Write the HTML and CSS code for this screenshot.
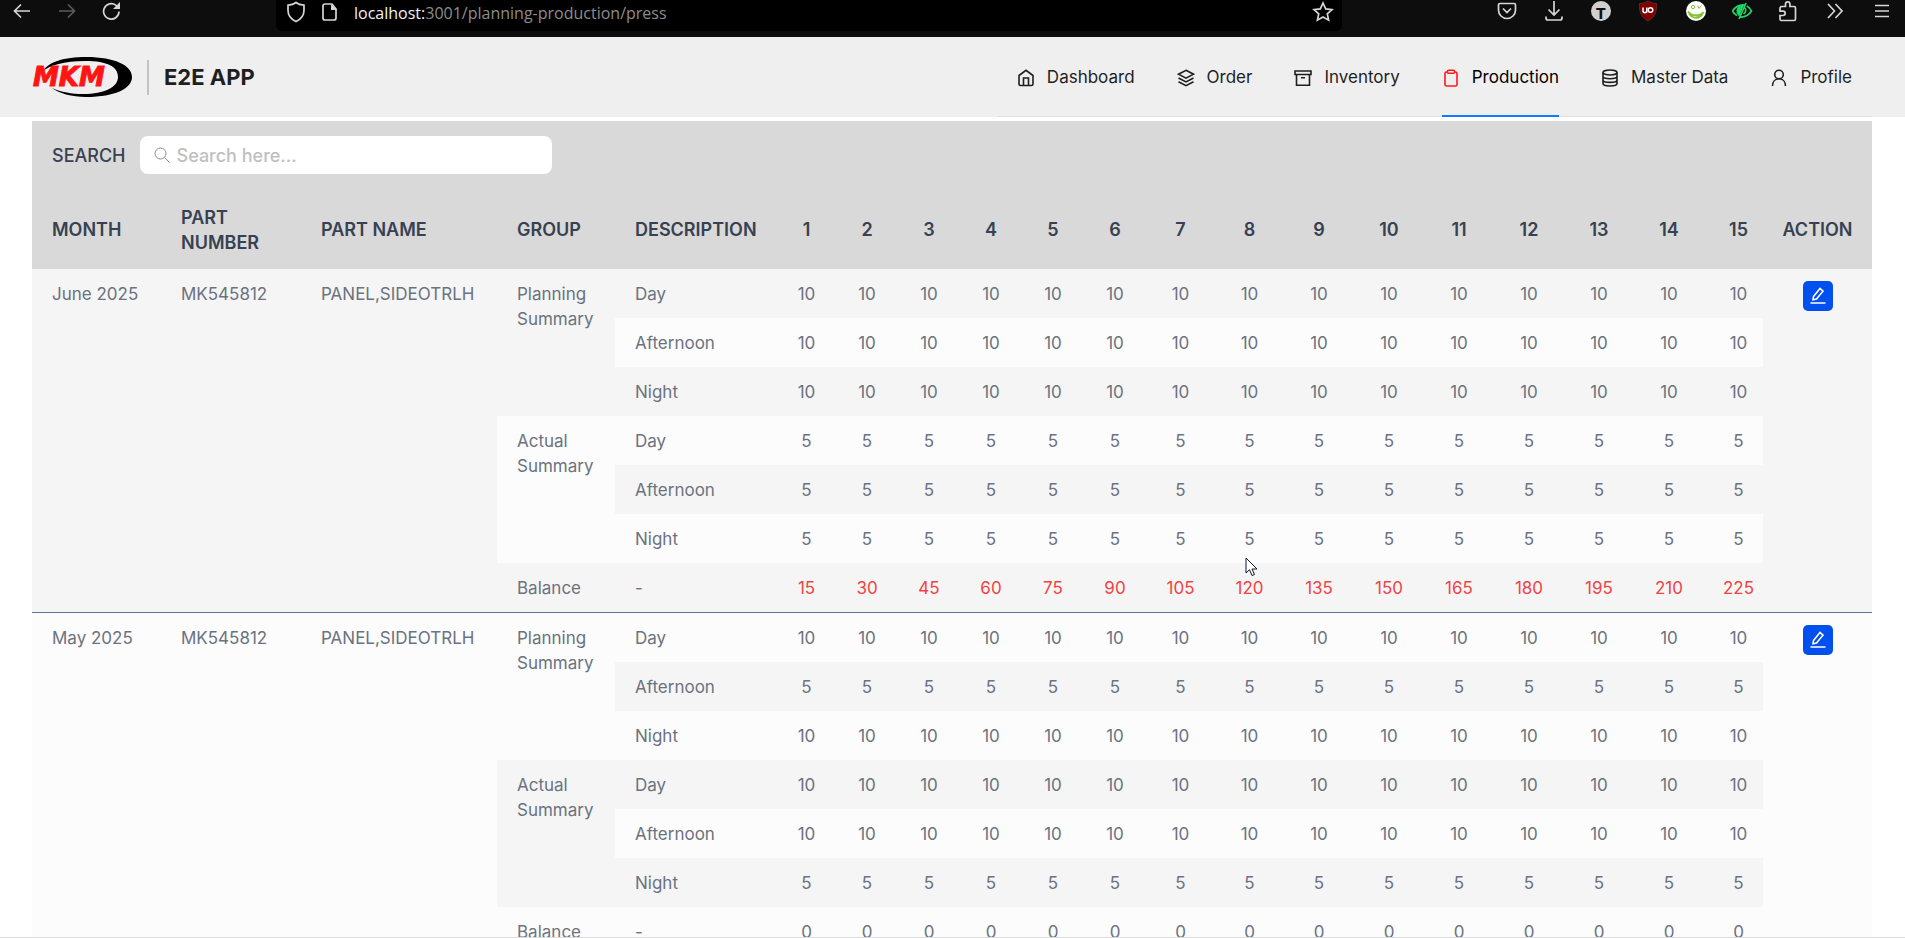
FILE: index.html
```html
<!DOCTYPE html>
<html lang="en">
<head>
<meta charset="utf-8">
<title>E2E APP</title>
<link rel="stylesheet" href="styles.css">
</head>
<body>
<div class="browser">
  <div class="browser-nav">
    <button class="tool" aria-label="Back"><svg width="18" height="16" viewBox="0 0 18 16"><path d="M17 8H1.500M8 1.500 1.500 8 8 14.500"/></svg></button>
    <button class="tool tool-dim" aria-label="Forward"><svg width="18" height="16" viewBox="0 0 18 16"><path d="M1 8h15.500M10 1.500 16.500 8 10 14.500"/></svg></button>
    <button class="tool" aria-label="Reload"><svg width="20" height="20" viewBox="0 0 20 20"><path d="M17 10.500a7.700 7.700 0 1 1-3-6.200l2 1.700"/><path class="solid" d="M18 1v7h-7z"/></svg></button>
  </div>
  <div class="address">
    <svg width="20" height="22" viewBox="0 0 20 22"><path d="M10 1.500C7.500 3.500 4.500 4 2 4.200v5c0 5 3 9 8 11.300 5-2.300 8-6.300 8-11.300v-5C15.500 4 12.500 3.500 10 1.500z"/></svg>
    <svg width="18" height="20" viewBox="0 0 18 20"><path d="M11 2H4a2 2 0 0 0-2 2v12a2 2 0 0 0 2 2h9a2 2 0 0 0 2-2V7z"/><path class="solid" d="M10 2v6h6z"/></svg>
    <span class="url"><span class="host">localhost:</span>3001/planning-production/press</span>
    <svg class="star" width="22" height="22" viewBox="0 0 22 22"><path d="m11 2 2.700 5.900 6.300.7-4.700 4.300 1.300 6.300L11 16l-5.600 3.200 1.300-6.300L2 8.600l6.300-.7z"/></svg>
  </div>
  <div class="browser-tools">
    <button class="tool" aria-label="Pocket"><svg width="20" height="20" viewBox="0 0 20 20"><path d="M3 2.500h14a1.500 1.500 0 0 1 1.500 1.500v5a8.500 8.500 0 0 1-17 0V4A1.500 1.500 0 0 1 3 2.500zM6 7.500l4 4 4-4"/></svg></button>
    <button class="tool" aria-label="Downloads"><svg width="20" height="22" viewBox="0 0 20 22"><path d="M10 1v14M4.500 9.500 10 15l5.500-5.500M2 16.500V18a2 2 0 0 0 2 2h12a2 2 0 0 0 2-2v-1.500"/></svg></button>
    <button class="tool" aria-label="Account"><span class="avatar">T</span></button>
    <button class="tool" aria-label="uBlock"><svg width="20" height="22" viewBox="0 0 20 22"><path class="shield" d="M10 1c2.500 1.500 5 2.300 8.500 2.500 0 8-.5 13-8.500 17.500C2 16.500 1.500 11.500 1.500 3.500 5 3.300 7.500 2.500 10 1z"/><path class="mark" d="M5 7.500v3.300a1.900 1.900 0 0 0 3.800 0V7.500V12.500"/><circle class="mark" cx="12.500" cy="10" r="2.300"/></svg></button>
    <button class="tool" aria-label="Smile"><svg width="22" height="22" viewBox="0 0 22 22"><circle class="face" cx="11" cy="11" r="10"/><path class="grin" d="M3 11.500c3.500 5 12 5 15.500.5M3.500 12c3 7.500 11.500 7.500 14.500.5"/><circle class="grin-eye" cx="8" cy="7" r="1.700"/><path class="grin-eye" d="m12.500 5.500 1.500 3 2.500-3"/></svg></button>
    <button class="tool" aria-label="Eye"><svg class="green" width="22" height="20" viewBox="0 0 22 20"><path d="M1.500 10C5 5 9 3.500 13.500 4M9 16c5 .3 9-2 11.500-6-1-2.300-2.700-4-4.700-5M15 2 8 18M13.500 6.500c2 2 1.500 5-1 6.500M6 14.500C4 13.500 2.500 12 1.500 10"/><path class="leaf" d="M12 4.500C7.500 5 5.500 8 6.500 12l1.500 2z"/></svg></button>
    <button class="tool" aria-label="Extensions"><svg width="20" height="22" viewBox="0 0 20 22"><path d="M3 6.500h4.500V4a2.200 2.200 0 0 1 4.400 0v2.500H16a1.500 1.500 0 0 1 1.500 1.500v11a1.500 1.500 0 0 1-1.500 1.500H3.500A1.500 1.500 0 0 1 2 19v-3.500h3a2.200 2.200 0 0 0 0-4.400H2V8z"/></svg></button>
    <button class="tool" aria-label="More tools"><svg width="18" height="18" viewBox="0 0 18 18"><path d="m2 2 6.500 7L2 16M9.500 2l6.500 7-6.500 7"/></svg></button>
    <button class="tool" aria-label="Menu"><svg width="18" height="16" viewBox="0 0 18 16"><path d="M2 2.500h14M2 8h14M2 13.500h14"/></svg></button>
  </div>
</div>

<header class="header">
  <a class="brand" href="#">
    <svg class="logo" width="102" height="44" viewBox="0 0 102 44" role="img" aria-label="MKM">
      <path fill-rule="evenodd" d="M10 17C16 7 32 2 54 2c30 0 46 9 46 20S84 42 54 42C40 42 26 38 20 33c9 4 20 6 31 6 22 0 35-7 35-17S76 6 53 6C32 6 18 10 10 17z"/>
      <text x="1" y="31">MKM</text>
    </svg>
    <span class="brand-name">E2E APP</span>
  </a>
  <nav class="menu">
    <a href="#"><svg width="18" height="18" viewBox="0 0 18 18"><path d="M2 6.500 9 1.300l7 5.200V15a1.500 1.500 0 0 1-1.500 1.500h-11A1.500 1.500 0 0 1 2 15zM6.500 16.500V9h5v7.500"/></svg>Dashboard</a>
    <a href="#"><svg width="18" height="18" viewBox="0 0 18 18"><path d="m9 1.300 7.500 3.900L9 9.100 1.500 5.200zM1.500 9 9 12.900 16.500 9M1.500 12.800 9 16.700l7.500-3.900"/></svg>Order</a>
    <a href="#"><svg width="18" height="18" viewBox="0 0 18 18"><path d="M1 2h16v3.500H1zM2.500 5.500v10.700h13V5.500M7 8.700h4"/></svg>Inventory</a>
    <a href="#" class="active" aria-current="page"><svg width="18" height="18" viewBox="0 0 18 18"><path d="M5.500 3h-1A1.500 1.500 0 0 0 3 4.500v11A1.500 1.500 0 0 0 4.500 17h9a1.500 1.500 0 0 0 1.500-1.500v-11A1.500 1.500 0 0 0 13.500 3h-1M6.500 1.300h5a1 1 0 0 1 1 1v1a1 1 0 0 1-1 1h-5a1 1 0 0 1-1-1v-1a1 1 0 0 1 1-1z"/></svg>Production</a>
    <a href="#"><svg width="18" height="18" viewBox="0 0 18 18"><ellipse cx="9" cy="3.500" rx="7" ry="2.500"/><path d="M2 3.500v11C2 16 5 17 9 17s7-1 7-2.500v-11M2 7.200c0 1.500 3 2.500 7 2.500s7-1 7-2.500M2 10.900c0 1.500 3 2.500 7 2.500s7-1 7-2.500"/></svg>Master Data</a>
    <a href="#"><svg width="18" height="18" viewBox="0 0 18 18"><circle cx="9" cy="5.500" r="4.300"/><path d="M2.500 17c0-4 2.500-7.200 6.500-7.200s6.500 3.200 6.500 7.200"/></svg>Profile</a>
  </nav>
</header>

<main class="content">
  <div class="toolbar">
    <label for="search">SEARCH</label>
    <div class="search-box">
      <svg width="16" height="16" viewBox="0 0 16 16"><circle cx="6.500" cy="6.500" r="5.500"/><path d="m10.500 10.500 5 5"/></svg>
      <input id="search" type="text" placeholder="Search here...">
    </div>
  </div>
  <table class="plan">
    <colgroup>
      <col class="c-month"><col class="c-number"><col class="c-name"><col class="c-group"><col class="c-desc">
      <col class="c-first"><col class="c-mid" span="5"><col class="c-step" span="2"><col class="c-wide" span="6"><col class="c-last"><col class="c-action">
    </colgroup>
    <thead><tr id="head"></tr></thead>
  </table>
</main>
<script src="table.js"></script>
</body>
</html>
```
FILE: styles.css
```css
* { box-sizing: border-box; }
body {
  margin: 0;
  height: 100vh;
  display: flex;
  flex-direction: column;
  overflow: hidden;
  border-bottom: 1px solid #dcdcdc;
  background: #fff;
  color: #6b7280;
  font: 17px/25px Inter, "Liberation Sans", sans-serif;
}
button { border: 0; background: none; padding: 0; font: inherit; }
svg { fill: none; stroke: currentColor; flex: none; display: block; }

.browser {
  flex: none;
  height: 37px;
  display: flex;
  justify-content: space-between;
  align-items: flex-start;
  background: #0d0d0d;
  color: #d6d6d6;
}
.browser path { stroke-width: 1.7; }
.browser .solid { fill: currentColor; stroke: none; }
.browser-nav { display: flex; gap: 25px; padding-left: 12px; width: 276px; }
.tool { width: 20px; height: 22px; display: grid; place-items: center; color: #d6d6d6; }
.tool-dim { color: #5c5c5c; }
.browser-nav .tool { flex: none; }
.address {
  flex: 1;
  height: 31px;
  padding: 0 8px 8px 10px;
  display: flex;
  align-items: center;
  gap: 15px;
  background: #000;
  border-radius: 0 0 6px 6px;
}
.url { flex: 1; color: #8c8c8c; font: 16px/24px "Open Sans", "Noto Sans", sans-serif; padding-top: 3px; }
.host { color: #f2f2f2; }
.browser-tools { width: 563px; padding: 0 13px 0 155px; display: flex; justify-content: space-between; }
.avatar {
  width: 20px; height: 20px; border-radius: 50%;
  display: grid; place-items: center;
  background: #d0d0d0; color: #111; font-size: 15px; font-weight: 800;
}
.browser .shield { fill: #800000; stroke: #5c2a2a; stroke-width: 1; }
.browser .mark { stroke: #fff; stroke-width: 1.5; }
.browser .face { fill: #fff; stroke: none; }
.browser .grin { stroke: #86c232; stroke-width: 2; }
.browser .grin-eye { stroke: #86c232; stroke-width: 1; }
.green { color: #23d366; }
.browser .leaf { fill: #23d366; }

.header {
  flex: none;
  height: 80px;
  padding: 0 33px 0 32px;
  display: flex;
  justify-content: space-between;
  background: #efefef;
}
.brand { display: flex; align-items: center; text-decoration: none; color: #1f1f1f; }
.logo path { fill: #000; stroke: none; }
.logo text {
  fill: #ff1414; stroke: #ff1414; stroke-width: 1;
  font: italic bold 26px "DejaVu Sans", sans-serif;
}
.brand-name {
  margin-left: 13px;
  padding-left: 15px;
  border-left: 2px solid #c2c2c2;
  font-size: 22px;
  line-height: 35px;
  font-weight: 700;
}
.menu { display: flex; gap: 42px; padding: 0 20px; border-bottom: 1px solid #e0e0e0; }
.menu a {
  display: flex;
  align-items: center;
  gap: 12px;
  color: #1f1f1f;
  text-decoration: none;
  margin-bottom: -1px;
  padding-top: 3px;
  border-bottom: 2px solid transparent;
}
.menu svg { stroke-width: 1.6; }
.menu a.active { color: #000; border-color: #1677ff; }
.menu .active svg { color: #ff1a1a; }

.content { padding: 4px 33px 0 32px; }
.toolbar {
  display: flex;
  align-items: center;
  gap: 14px;
  padding: 15px 20px 16px 20px;
  background: #d9d9d9;
}
.toolbar label { color: #374151; font-size: 18px; font-weight: 500; }
.search-box {
  width: 412px;
  height: 38px;
  padding: 0 14px;
  display: flex;
  align-items: center;
  gap: 7px;
  background: #fff;
  border-radius: 8px;
  color: #8c8c8c;
}
.search-box input { flex: 1; min-width: 0; border: 0; outline: 0; padding: 0; background: none; font: inherit; font-size: 18px; font-weight: 500; }
.search-box input::placeholder { color: #bfbfbf; }

.plan { width: 100%; table-layout: fixed; border-collapse: collapse; }
.c-month { width: 129px; }
.c-number { width: 140px; }
.c-name { width: 196px; }
.c-group { width: 118px; }
.c-desc { width: 162px; }
.c-first { width: 59px; }
.c-mid { width: 62px; }
.c-step { width: 69px; }
.c-wide { width: 70px; }
.c-last { width: 59px; }
.c-action { width: 109px; }
.plan th { height: 79px; padding: 0 20px; background: #d9d9d9; color: #374151; font-size: 18px; font-weight: 600; text-align: left; }
.plan td { padding: 13px 20px 11px; vertical-align: top; }
.plan th.num, .plan td.num { padding-left: 0; padding-right: 0; text-align: center; }
.plan th.num:nth-last-child(2), .plan td.last { padding-left: 10px; }
.plan th.action { padding: 0; text-align: center; }
.plan td.action { padding: 12px 0; }
.month + .month { border-top: 1px solid #64748b; }
.odd { background: #f5f5f5; }
.even { background: #fcfcfc; }
.balance .num { color: #ef4444; }
.balance .zero { color: #6b7280; }
.edit {
  width: 30px; height: 30px; margin: 0 auto;
  display: grid; place-items: center;
  background: #0050f0; color: #fff; border-radius: 5px;
}
.pointed { position: relative; }
.pointer { position: absolute; left: 30px; top: 43px; z-index: 1; fill: #fff; stroke: #111827; }
```
FILE: table.js
```javascript
const days = Array.from({ length: 15 }, (_, i) => i + 1);
const shifts = ["Day", "Afternoon", "Night"];
const months = [
  { name: "June 2025", plan: [10, 10, 10], actual: [5, 5, 5], step: 15 },
  { name: "May 2025", plan: [10, 5, 10], actual: [10, 10, 5], step: 0 },
];
const pencil = '<svg width="18" height="18" viewBox="0 0 18 18" stroke-width="1.600"><path d="m4.500 9.500 6.500-8 3 2.700-6.500 7.800-3.500.7zM1.500 16h15"/></svg>';
const pointer = '<svg class="pointer" width="13" height="20" viewBox="0 0 13 20"><path d="M1 1v15l3.500-3.300L7 18.500l2.500-1L7 12h5z"/></svg>';

document.getElementById("head").innerHTML =
  ["MONTH", "PART NUMBER", "PART NAME", "GROUP", "DESCRIPTION"].map((t) => `<th>${t}</th>`).join("") +
  days.map((d) => `<th class="num">${d}</th>`).join("") +
  '<th class="action">ACTION</th>';

let line = 0;
const numbers = (valueOf, pointed) =>
  days.map((d) => {
    const v = valueOf(d);
    const mark = pointed && d === 8;
    return `<td class="num${d === 15 ? " last" : ""}${v === 0 ? " zero" : ""}${mark ? " pointed" : ""}">${v}${mark ? pointer : ""}</td>`;
  }).join("");

const table = document.querySelector(".plan");
months.forEach((m, index) => {
  const body = document.createElement("tbody");
  body.className = "month";
  let html = "";
  const row = (cls, cells) => { html += `<tr class="${line++ % 2 ? "even" : "odd"} ${cls}">${cells}</tr>`; };
  [["Planning Summary", m.plan], ["Actual Summary", m.actual]].forEach(([group, values], g) => {
    shifts.forEach((shift, s) => {
      const first = g === 0 && s === 0;
      row("",
        (first ? `<td rowspan="7">${m.name}</td><td rowspan="7">MK545812</td><td rowspan="7">PANEL,SIDEOTRLH</td>` : "") +
        (s === 0 ? `<td rowspan="3">${group}</td>` : "") +
        `<td>${shift}</td>` + numbers(() => values[s], index === 0 && g === 1 && s === 2) +
        (first ? `<td rowspan="7" class="action"><button class="edit" aria-label="Edit ${m.name}">${pencil}</button></td>` : ""));
    });
  });
  row("balance", "<td>Balance</td><td>-</td>" + numbers((d) => d * m.step));
  body.innerHTML = html;
  table.append(body);
});
```
